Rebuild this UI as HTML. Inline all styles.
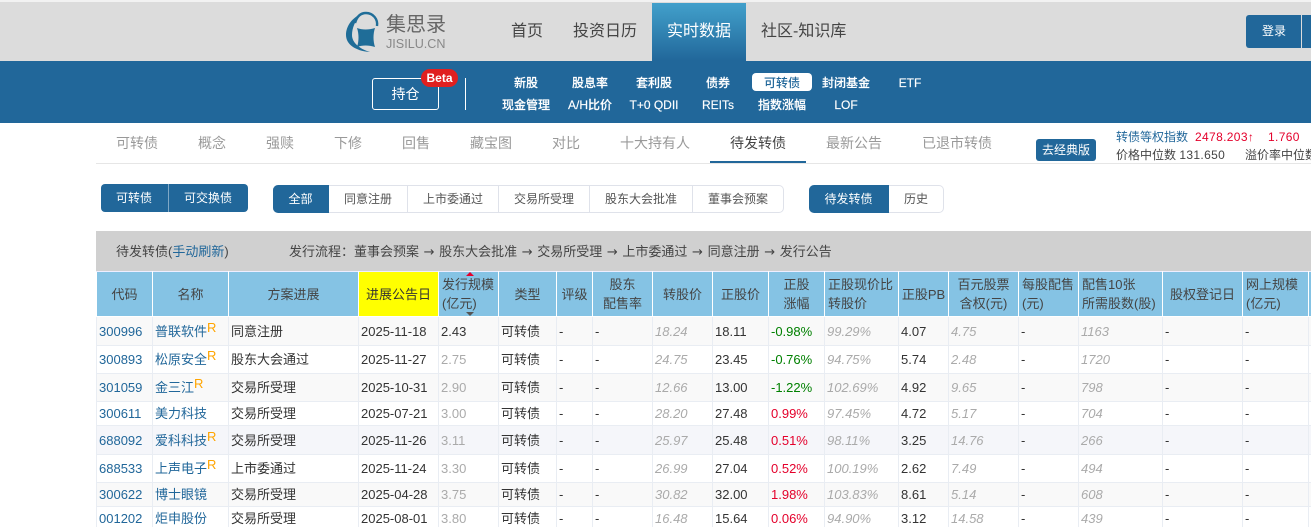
<!DOCTYPE html>
<html lang="zh"><head><meta charset="utf-8"><title>集思录</title>
<style>
html,body{margin:0;padding:0;width:1311px;height:527px;overflow:hidden;background:#fff}
body{position:relative;font-family:"Liberation Sans","Noto Sans CJK SC",sans-serif;font-size:13px;color:#333}
.a{position:absolute;white-space:nowrap}
.c{position:absolute;white-space:nowrap;transform:translateX(-50%);line-height:18px}
.n{font-size:16px;color:#444;line-height:22px;top:21px}
.s{color:#fff;font-size:12px;font-weight:500;-webkit-text-stroke:.15px #fff}
.t{font-size:14px;color:#999;top:133px;line-height:20px}
.b{position:absolute;box-sizing:border-box;text-align:center;font-size:12px;color:#555;background:#fff;border:1px solid #dfe2ea;border-left:0;top:185px;height:28px;line-height:27px}
.on{background:#21679a;color:#fff;border-color:#21679a}
table{position:absolute;left:96px;top:271px;border-collapse:collapse;table-layout:fixed;width:1218px}
th{background:#85c3e4;font-weight:400;color:#444;font-size:13px;line-height:19px;border:1px solid #fff;border-top:1px solid #eef;padding:0 2px;height:44px;text-align:center;box-sizing:border-box;overflow:hidden;white-space:nowrap}
th.l{text-align:left;padding-left:3px}
th.y{background:#ff0;color:#333}
td{border:1px solid #e9edf3;padding:0 2px;font-size:13px;line-height:16px;color:#333;white-space:nowrap;overflow:hidden;box-sizing:border-box}
tr.h td{padding-top:2px}
tr.o td{background:#f9f9f9}
tr.p td{background:#f5f6fa}
td a{color:#21679a;text-decoration:none}
td sup{color:#ffa500;font-size:13px;line-height:0;vertical-align:4px}
.g{color:#aaa}.i{color:#aaa;font-style:italic}.gr{color:#008000}.r{color:#e4002b}
.ar{font-family:"DejaVu Sans",sans-serif;margin:0 1px}
</style></head><body>
<div class="a" style="left:0;top:0;width:1311px;height:2px;background:#f2f2f2"></div>
<div class="a" style="left:0;top:2px;width:1311px;height:59px;background:#dcdcdc"></div>
<svg class="a" style="left:345px;top:11px" width="36" height="42" viewBox="0 0 36 42">
<path fill="#1f6d98" d="M16 3C7 7 1 15 1 24C1 33 10 40 25 41C15 38 7 32 7 24C7 17 10 10 16 3Z"/>
<path fill="none" stroke="#1f6d98" stroke-width="2.4" d="M10 12C12 5 16 2 21 2C28 2 33 8 32 15"/>
<path fill="#1f6d98" d="M12 17C17 19 24 19 30 17C28 23 28 30 30 36C24 34 17 34 12 36C14 30 14 23 12 17Z"/>
</svg>
<div class="a" style="left:386px;top:12px;font-size:20px;line-height:26px;color:#666">集思录</div>
<div class="a" style="left:386px;top:36px;font-size:12.6px;line-height:16px;color:#888">JISILU.CN</div>
<div class="a n" style="left:511px">首页</div>
<div class="a n" style="left:573px">投资日历</div>
<div class="a" style="left:652px;top:3px;width:94px;height:58px;background:linear-gradient(#42a0cb,#21679a)"></div>
<div class="a n" style="left:667px;color:#fff">实时数据</div>
<div class="a n" style="left:761px">社区-知识库</div>
<div class="a" style="left:1246px;top:15px;width:65px;height:33px;background:#21679a;border-radius:3px 0 0 3px"></div>
<div class="a" style="left:1301px;top:15px;width:1px;height:33px;background:#dcdcdc"></div>
<div class="a" style="left:1262px;top:22px;color:#fff;font-size:12px;line-height:18px">登录</div>
<div class="a" style="left:0;top:61px;width:1311px;height:62px;background:#21679a"></div>
<div class="a" style="left:372px;top:78px;width:65px;height:30px;border:1px solid #fff;border-radius:3px;color:#fff;font-size:14px;line-height:31px;text-align:center">持仓</div>
<div class="a" style="left:421px;top:69px;width:37px;height:18px;background:#e02020;border-radius:9px;color:#fff;font-size:12px;font-weight:700;line-height:18px;text-align:center">Beta</div>
<div class="a" style="left:465px;top:78px;width:1px;height:32px;background:#fff"></div>
<div class="a" style="left:752px;top:73px;width:60px;height:18px;background:#fff;border-radius:4px"></div>
<div class="c s" style="left:526px;top:74px">新股</div><div class="c s" style="left:590px;top:74px">股息率</div><div class="c s" style="left:654px;top:74px">套利股</div><div class="c s" style="left:718px;top:74px">债券</div><div class="c s" style="left:782px;top:74px;color:#21679a;-webkit-text-stroke:0">可转债</div><div class="c s" style="left:846px;top:74px">封闭基金</div><div class="c s" style="left:910px;top:74px">ETF</div>
<div class="c s" style="left:526px;top:96px">现金管理</div><div class="c s" style="left:590px;top:96px">A/H比价</div><div class="c s" style="left:654px;top:96px">T+0 QDII</div><div class="c s" style="left:718px;top:96px">REITs</div><div class="c s" style="left:782px;top:96px">指数涨幅</div><div class="c s" style="left:846px;top:96px">LOF</div>
<div class="a" style="left:96px;top:163px;width:1215px;height:1px;background:#e6e6e6"></div>
<div class="a t" style="left:116px">可转债</div><div class="a t" style="left:198px">概念</div><div class="a t" style="left:266px">强赎</div><div class="a t" style="left:334px">下修</div><div class="a t" style="left:402px">回售</div><div class="a t" style="left:470px">藏宝图</div><div class="a t" style="left:552px">对比</div><div class="a t" style="left:620px">十大持有人</div><div class="a t" style="left:730px;color:#444">待发转债</div><div class="a t" style="left:826px">最新公告</div><div class="a t" style="left:922px">已退市转债</div>
<div class="a" style="left:710px;top:161px;width:96px;height:2px;background:#21679a"></div>
<div class="a" style="left:1036px;top:139px;width:60px;height:22px;background:#21679a;border-radius:3px;color:#fff;font-size:12px;line-height:23px;text-align:center">去经典版</div>
<div class="a" style="left:1116px;top:129px;font-size:12px;line-height:17px;color:#21679a">转债等权指数</div>
<div class="a" style="left:1195px;top:129px;font-size:12px;line-height:17px;color:#e4002b;letter-spacing:.35px">2478.203↑</div>
<div class="a" style="left:1268px;top:129px;font-size:12px;line-height:17px;color:#e4002b;letter-spacing:.35px">1.760</div>
<div class="a" style="left:1116px;top:147px;font-size:12px;line-height:17px;color:#444">价格中位数 <span style="letter-spacing:.35px">131.650</span></div>
<div class="a" style="left:1245px;top:147px;font-size:12px;line-height:17px;color:#444">溢价率中位数</div>
<div class="a" style="left:101px;top:184px;width:147px;height:28px;background:#21679a;border-radius:4px"></div>
<div class="a" style="left:168px;top:184px;width:1px;height:28px;background:#7fa8c6"></div>
<div class="a" style="left:116px;top:189px;color:#fff;font-size:12px;line-height:18px">可转债</div>
<div class="a" style="left:184px;top:189px;color:#fff;font-size:12px;line-height:18px">可交换债</div>
<div class="b on" style="left:273px;width:56px;border-radius:5px 0 0 5px">全部</div>
<div class="b" style="left:329px;width:79px">同意注册</div>
<div class="b" style="left:408px;width:91px">上市委通过</div>
<div class="b" style="left:499px;width:91px">交易所受理</div>
<div class="b" style="left:590px;width:103px">股东大会批准</div>
<div class="b" style="left:693px;width:91px;border-radius:0 5px 5px 0">董事会预案</div>
<div class="b on" style="left:809px;width:80px;border-radius:5px 0 0 5px">待发转债</div>
<div class="b" style="left:889px;width:55px;border-radius:0 5px 5px 0">历史</div>
<div class="a" style="left:96px;top:231px;width:1215px;height:40px;background:#d0d0d0"></div>
<div class="a" style="left:116px;top:243px;font-size:13px;line-height:18px;color:#444">待发转债(<span style="color:#21679a">手动刷新</span>)</div>
<div class="a" style="left:289px;top:243px;font-size:13px;line-height:18px;color:#444">发行流程：董事会预案 <span class="ar">→</span> 股东大会批准 <span class="ar">→</span> 交易所受理 <span class="ar">→</span> 上市委通过 <span class="ar">→</span> 同意注册 <span class="ar">→</span> 发行公告</div>
<table>
<colgroup><col style="width:56px"><col style="width:76px"><col style="width:130px"><col style="width:80px"><col style="width:60px"><col style="width:58px"><col style="width:36px"><col style="width:60px"><col style="width:60px"><col style="width:56px"><col style="width:56px"><col style="width:74px"><col style="width:50px"><col style="width:70px"><col style="width:60px"><col style="width:84px"><col style="width:80px"><col style="width:66px"><col style="width:6px"></colgroup>
<tr style="height:45px"><th>代码</th><th>名称</th><th>方案进展</th><th class="y">进展公告日</th><th class="l">发行规模<br>(亿元)</th><th>类型</th><th>评级</th><th>股东<br>配售率</th><th>转股价</th><th>正股价</th><th>正股<br>涨幅</th><th class="l">正股现价比<br>转股价</th><th>正股PB</th><th>百元股票<br>含权(元)</th><th class="l">每股配售<br>(元)</th><th class="l">配售10张<br>所需股数(股)</th><th>股权登记日</th><th class="l">网上规模<br>(亿元)</th><th></th></tr>
<tr class="o h" style="height:29px"><td><a>300996</a></td><td><a>普联软件</a><sup>R</sup></td><td>同意注册</td><td>2025-11-18</td><td>2.43</td><td>可转债</td><td>-</td><td>-</td><td class="i">18.24</td><td>18.11</td><td class="gr">-0.98%</td><td class="i">99.29%</td><td>4.07</td><td class="i">4.75</td><td>-</td><td class="i">1163</td><td>-</td><td>-</td><td></td></tr>
<tr style="height:28px"><td><a>300893</a></td><td><a>松原安全</a><sup>R</sup></td><td>股东大会通过</td><td>2025-11-27</td><td class="g">2.75</td><td>可转债</td><td>-</td><td>-</td><td class="i">24.75</td><td>23.45</td><td class="gr">-0.76%</td><td class="i">94.75%</td><td>5.74</td><td class="i">2.48</td><td>-</td><td class="i">1720</td><td>-</td><td>-</td><td></td></tr>
<tr class="o" style="height:28px"><td><a>301059</a></td><td><a>金三江</a><sup>R</sup></td><td>交易所受理</td><td>2025-10-31</td><td class="g">2.90</td><td>可转债</td><td>-</td><td>-</td><td class="i">12.66</td><td>13.00</td><td class="gr">-1.22%</td><td class="i">102.69%</td><td>4.92</td><td class="i">9.65</td><td>-</td><td class="i">798</td><td>-</td><td>-</td><td></td></tr>
<tr style="height:24px"><td><a>300611</a></td><td><a>美力科技</a></td><td>交易所受理</td><td>2025-07-21</td><td class="g">3.00</td><td>可转债</td><td>-</td><td>-</td><td class="i">28.20</td><td>27.48</td><td class="r">0.99%</td><td class="i">97.45%</td><td>4.72</td><td class="i">5.17</td><td>-</td><td class="i">704</td><td>-</td><td>-</td><td></td></tr>
<tr class="p h" style="height:29px"><td><a>688092</a></td><td><a>爱科科技</a><sup>R</sup></td><td>交易所受理</td><td>2025-11-26</td><td class="g">3.11</td><td>可转债</td><td>-</td><td>-</td><td class="i">25.97</td><td>25.48</td><td class="r">0.51%</td><td class="i">98.11%</td><td>3.25</td><td class="i">14.76</td><td>-</td><td class="i">266</td><td>-</td><td>-</td><td></td></tr>
<tr style="height:28px"><td><a>688533</a></td><td><a>上声电子</a><sup>R</sup></td><td>上市委通过</td><td>2025-11-24</td><td class="g">3.30</td><td>可转债</td><td>-</td><td>-</td><td class="i">26.99</td><td>27.04</td><td class="r">0.52%</td><td class="i">100.19%</td><td>2.62</td><td class="i">7.49</td><td>-</td><td class="i">494</td><td>-</td><td>-</td><td></td></tr>
<tr class="o" style="height:24px"><td><a>300622</a></td><td><a>博士眼镜</a></td><td>交易所受理</td><td>2025-04-28</td><td class="g">3.75</td><td>可转债</td><td>-</td><td>-</td><td class="i">30.82</td><td>32.00</td><td class="r">1.98%</td><td class="i">103.83%</td><td>8.61</td><td class="i">5.14</td><td>-</td><td class="i">608</td><td>-</td><td>-</td><td></td></tr>
<tr style="height:24px"><td><a>001202</a></td><td><a>炬申股份</a></td><td>交易所受理</td><td>2025-08-01</td><td class="g">3.80</td><td>可转债</td><td>-</td><td>-</td><td class="i">16.48</td><td>15.64</td><td class="r">0.06%</td><td class="i">94.90%</td><td>3.12</td><td class="i">14.58</td><td>-</td><td class="i">439</td><td>-</td><td>-</td><td></td></tr>
</table>
<div class="a" style="left:466px;top:272px;width:0;height:0;border:4px solid transparent;border-top:0;border-bottom:4px solid #e4002b"></div>
<div class="a" style="left:466px;top:312px;width:0;height:0;border:4px solid transparent;border-bottom:0;border-top:4px solid #555"></div>
</body></html>
